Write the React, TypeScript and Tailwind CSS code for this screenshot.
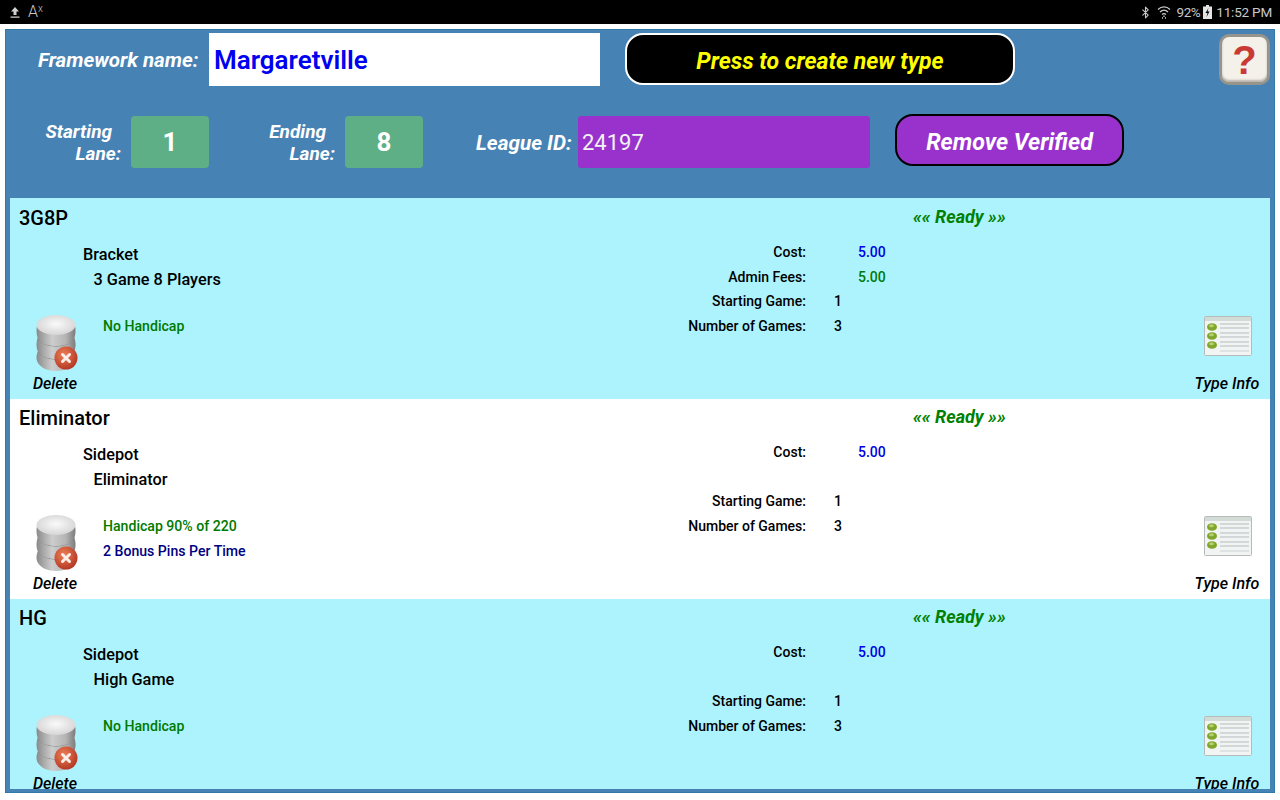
import { Bluetooth } from "lucide-react";

const roboto = "font-['Roboto',sans-serif]";

type Framework = {
  name: string;
  kind: string;
  title: string;
  adminFees?: string;
  handicap: string;
  bonus?: string;
};

const frameworks: Framework[] = [
  { name: "3G8P", kind: "Bracket", title: "3 Game 8 Players", adminFees: "5.00", handicap: "No Handicap" },
  { name: "Eliminator", kind: "Sidepot", title: "Eliminator", handicap: "Handicap 90% of 220", bonus: "2 Bonus Pins Per Time" },
  { name: "HG", kind: "Sidepot", title: "High Game", handicap: "No Handicap" },
];

function DeleteIcon() {
  return (
    <svg width="44" height="56" viewBox="0 0 44 56" className="block">
      <defs>
        <linearGradient id="disc" x1="0" x2="1" y1="0" y2="0">
          <stop offset="0" stopColor="#8a8a8a" />
          <stop offset="0.4" stopColor="#cdcdcd" />
          <stop offset="0.75" stopColor="#b4b4b4" />
          <stop offset="1" stopColor="#7c7c7c" />
        </linearGradient>
        <radialGradient id="disctop" cx="0.5" cy="0.45" r="0.6">
          <stop offset="0" stopColor="#fafafa" />
          <stop offset="1" stopColor="#d2d2d2" />
        </radialGradient>
        <radialGradient id="badge" cx="0.4" cy="0.35" r="0.7">
          <stop offset="0" stopColor="#ec8058" />
          <stop offset="1" stopColor="#b23420" />
        </radialGradient>
      </defs>
      <path d="M2 36c-2 4-2 9 0 12 3 5 10 8 18 8s15-3 18-8c2-3 2-8 0-12z" fill="url(#disc)" />
      <path d="M2 37c4 5 11 7 18 7s14-2 18-7" fill="none" stroke="#777" strokeWidth="1" />
      <path d="M2 22c-2 4-2 11 0 15 3 5 10 7 18 7s15-2 18-7c2-4 2-11 0-15z" fill="url(#disc)" />
      <path d="M2 24c4 5 11 7 18 7s14-2 18-7" fill="none" stroke="#7c7c7c" strokeWidth="1" />
      <path d="M2 8C0 12 0 19 2 24c3 5 10 7 18 7s15-2 18-7c2-5 2-12 0-16z" fill="url(#disc)" />
      <ellipse cx="20" cy="10" rx="19.500" ry="10" fill="url(#disctop)" />
      <circle cx="30" cy="43" r="11.500" fill="url(#badge)" />
      <path d="M26.500 39.500l7 7M33.500 39.500l-7 7" stroke="#fbeee8" strokeWidth="3" strokeLinecap="round" />
    </svg>
  );
}

function InfoIcon() {
  return (
    <svg width="48" height="40" viewBox="0 0 48 40" className="block">
      <rect x="0.500" y="0.500" width="47" height="39" rx="1" fill="#f1f4f2" stroke="#b4bdb9" />
      <rect x="1" y="1" width="46" height="4" fill="#d3dbd7" />
      {[11, 20, 29].map((y) => (
        <g key={y}>
          <ellipse cx="8" cy={y} rx="5" ry="3.800" fill="#7fa62c" />
          <ellipse cx="7.500" cy={y - 1.200} rx="2.500" ry="1.500" fill="#b5d06a" />
          <path d={`M16 ${y - 3}H45M16 ${y + 1}H45`} stroke="#b6bbbd" strokeWidth="1" />
        </g>
      ))}
      <path d="M16 35H45" stroke="#cdd0d2" strokeWidth="1" />
    </svg>
  );
}

function StatusBar() {
  return (
    <div className={`flex h-6 items-center bg-black text-[14px] text-[#c8c8c8] ${roboto}`}>
      <svg width="14" height="14" viewBox="0 0 14 14" className="ml-2">
        <path d="M7 2l4 4.500H8.500V10h-3V6.500H3z M2.500 11.500h9v1.300h-9z" fill="#d0d0d0" />
      </svg>
      <span className="ml-[6px] flex items-start text-[16px] leading-none font-light">
        A<span className="text-[10px] leading-none">x</span>
      </span>
      <Bluetooth size={13} strokeWidth={2} className="ml-auto text-[#c8c8c8]" />
      <svg width="14" height="15" viewBox="0 0 14 15" className="ml-[5px]">
        <path d="M1 4.500C4.500 1 9.500 1 13 4.500M3 7c2.500-2.300 5.500-2.300 8 0M5 9.500c1.300-1.100 2.700-1.100 4 0" fill="none" stroke="#c8c8c8" strokeWidth="1.300" />
        <path d="M7 10.500v1.500M5 13h1M8 13h1" stroke="#c8c8c8" strokeWidth="1.300" />
      </svg>
      <span className="ml-[5px] text-[13.500px] tracking-[-0.4px]">92%</span>
      <svg width="9" height="14" viewBox="0 0 9 14" className="ml-[3px]">
        <path d="M3 0h3v1.500h3V14H0V1.500h3z" fill="#e4e4e4" />
        <path d="M5.500 3L2.500 8h2l-1 4 3-5.500h-2z" fill="#000" />
      </svg>
      <span className="mr-2 ml-[4px] text-[13.500px] tracking-[-0.2px]">11:52 PM</span>
    </div>
  );
}

function FrameworkRow({ item, index }: { item: Framework; index: number }) {
  const money = "pl-[52px]";
  const rowBg = index % 2 === 0 ? "bg-[#adf3fe]" : "bg-white";

  return (
    <div className={`flex h-[200px] shrink-0 flex-col text-black ${rowBg}`}>
      <div className="flex h-[38px] items-center">
        <div className="w-[903px] pl-[9px] text-[20px] font-medium">{item.name}</div>
        <div className="pb-[4px] text-[18px] font-bold text-[#008000] italic">«« Ready »»</div>
      </div>
      <div className="flex flex-1">
        <div className="w-[560px] pt-[5px]">
          <div className="pl-[73px] text-[16.300px] leading-[25px] font-medium">{item.kind}</div>
          <div className="pl-[83.500px] text-[16.300px] leading-[25px] font-medium">{item.title}</div>
          <div className="mt-[21px] flex">
            <div className="flex w-[90px] flex-col items-center pt-[2px]">
              <div className="pl-[5px]">
                <DeleteIcon />
              </div>
              <div className="mt-[3px] text-[16px] leading-[20px] font-medium italic">Delete</div>
            </div>
            <div className="pt-px pl-[3px] text-[14.100px] leading-[24.500px] font-medium">
              <div className="text-[#007a00]">{item.handicap}</div>
              {item.bonus && <div className="text-[#000080]">{item.bonus}</div>}
            </div>
          </div>
        </div>
        <div className="grid w-[330px] grid-cols-[236px_1fr] content-start pt-[3px] text-[14px] leading-[24.500px] font-medium">
          <div className="text-right">Cost:</div>
          <div className={`${money} text-[#0000e0]`}>5.00</div>
          <div className="text-right">{item.adminFees ? "Admin Fees:" : "\u00a0"}</div>
          <div className={`${money} text-[#007a00]`}>{item.adminFees}</div>
          <div className="text-right">Starting Game:</div>
          <div className="pl-[28px]">1</div>
          <div className="text-right">Number of Games:</div>
          <div className="pl-[28px]">3</div>
        </div>
        <div className="mr-[10px] ml-auto flex w-[66px] flex-col items-center pt-[79px]">
          <div className="pl-[2px]">
            <InfoIcon />
          </div>
          <div className="mt-[18px] text-[16px] leading-[20px] font-medium whitespace-nowrap italic">Type Info</div>
        </div>
      </div>
    </div>
  );
}

export default function App() {
  return (
    <div className={`flex h-[800px] w-[1280px] flex-col overflow-hidden bg-white ${roboto}`}>
      <StatusBar />
      <div className="mx-[5px] mt-[5px] flex h-[764px] flex-col overflow-hidden border border-[#2f78a8] bg-[#4682b4] pb-[3px]">
        {/* Header */}
        <div className="h-[168px] shrink-0 text-white">
          <div className="flex h-[86px] items-start pt-[3px]">
            <div className="ml-[32px] w-[164px] pt-[15px] text-[20.500px] leading-[24px] font-bold whitespace-nowrap italic">
              Framework name:
            </div>
            <div className="ml-[7px] flex h-[53px] w-[391px] items-center bg-white pt-[2px] pl-[5px] text-[26px] font-semibold text-[#0000f0]">
              Margaretville
            </div>
            <button className="ml-[25px] h-[52px] w-[390px] rounded-[18px] border-2 border-white bg-black pt-[6px] text-[23px] font-bold text-[#ffff00] italic">
              Press to create new type
            </button>
            <button className="relative mt-px ml-[204px] flex h-[51px] w-[51px] items-center justify-center rounded-[10px] border-[3px] border-[#97948c] bg-[#f4f0ea] font-['Liberation_Sans',sans-serif] text-[40px] leading-none font-bold text-[#c93a35] shadow-[inset_0_-2px_2px_#b9b5ad]">
              ?
            </button>
          </div>
          <div className="flex items-start">
            <div className="ml-[35px] w-[80px] pt-[5px] text-right text-[19px] leading-[22px] font-bold italic">
              <div className="pr-[9px]">Starting</div>
              <div>Lane:</div>
            </div>
            <div className="ml-[10px] flex h-[52px] w-[78px] items-center justify-center rounded-[4px] bg-[#5faf86] pt-[1px] text-[26px] font-bold">
              1
            </div>
            <div className="ml-[47px] w-[79px] pt-[5px] text-right text-[19px] leading-[22px] font-bold italic">
              <div className="pr-[9px]">Ending</div>
              <div>Lane:</div>
            </div>
            <div className="ml-[10px] flex h-[52px] w-[78px] items-center justify-center rounded-[4px] bg-[#5faf86] pt-[1px] text-[26px] font-bold">
              8
            </div>
            <div className="ml-[53px] w-[96px] pt-[15px] text-[20.700px] leading-[24px] font-bold whitespace-nowrap italic">
              League ID:
            </div>
            <div className="ml-[6px] flex h-[52px] w-[292px] items-center rounded-[3px] bg-[#9932cc] pt-[1px] pl-[4px] text-[22px] text-[#f2f2f2]">
              24197
            </div>
            <button className="-mt-[2px] ml-[25px] h-[52px] w-[229px] rounded-[18px] border-2 border-black bg-[#9932cc] pt-[5px] text-[23.200px] font-bold italic">
              Remove Verified
            </button>
          </div>
        </div>
        {/* Rows */}
        <div className="mx-[4px] flex min-h-0 flex-1 flex-col overflow-hidden bg-[#adf3fe] pt-px">
          {frameworks.map((item, i) => (
            <FrameworkRow key={item.name} item={item} index={i} />
          ))}
        </div>
      </div>
    </div>
  );
}
